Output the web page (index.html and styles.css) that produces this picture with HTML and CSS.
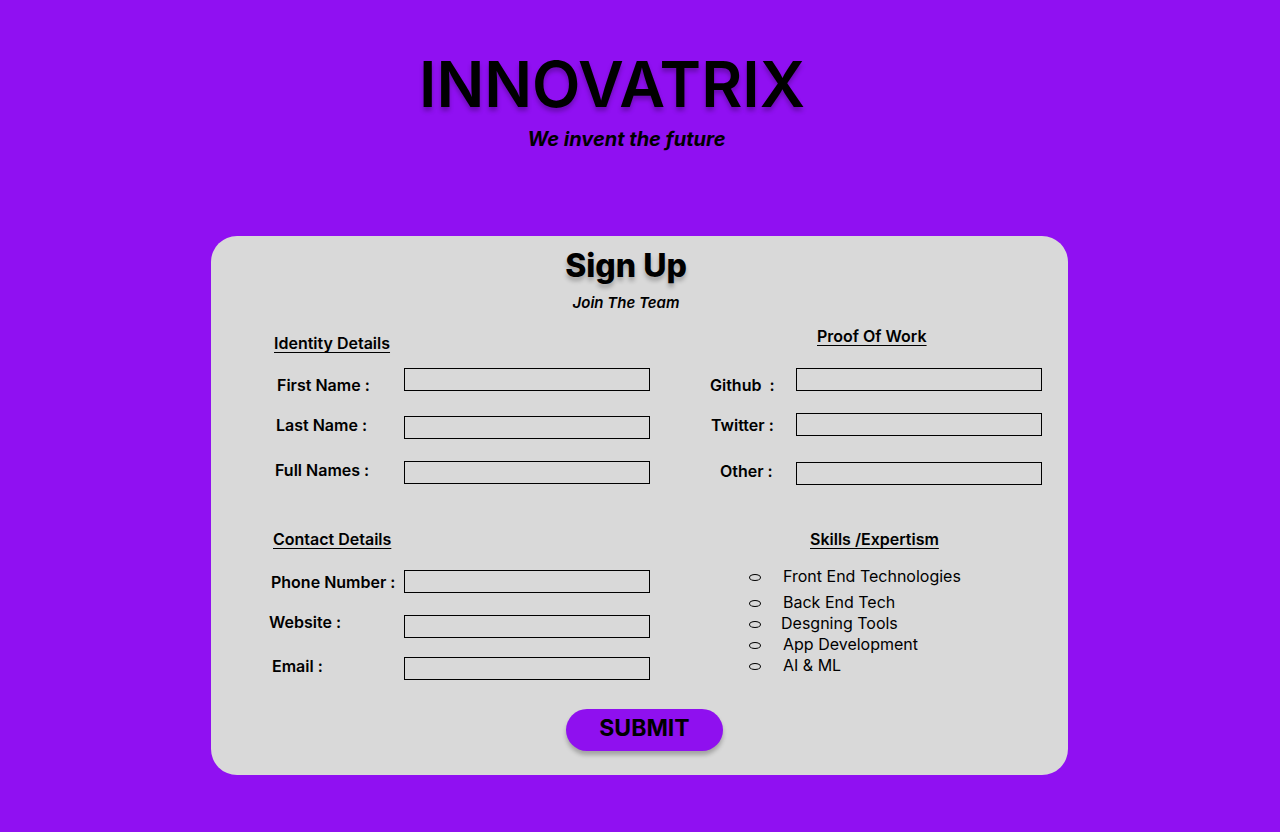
FILE: index.html
```html
<!DOCTYPE html>
<html lang="en">
<head>
<meta charset="utf-8">
<title>Innovatrix - Sign Up</title>
<link rel="stylesheet" href="styles.css">
</head>
<body>
<header class="brand">
  <h1 class="brand-title">INNOVATRIX</h1>
  <p class="brand-tagline">We invent the future</p>
</header>

<main class="card">
  <div class="card-head">
    <h2 class="card-title">Sign Up</h2>
    <p class="card-sub">Join The Team</p>
  </div>

  <form class="form-grid">
    <div class="col col-left">
      <section class="group group-identity">
        <h3 class="group-title gt-identity">Identity Details</h3>
        <div class="row r-first"><label class="lbl">First Name :</label><input class="field" type="text"></div>
        <div class="row r-last"><label class="lbl">Last Name :</label><input class="field" type="text"></div>
        <div class="row r-full"><label class="lbl">Full Names :</label><input class="field" type="text"></div>
      </section>
      <section class="group group-contact">
        <h3 class="group-title gt-contact">Contact Details</h3>
        <div class="row r-phone"><label class="lbl">Phone Number :</label><input class="field" type="text"></div>
        <div class="row r-web"><label class="lbl">Website :</label><input class="field" type="text"></div>
        <div class="row r-email"><label class="lbl">Email :</label><input class="field" type="text"></div>
      </section>
    </div>

    <div class="col col-right">
      <section class="group group-proof">
        <h3 class="group-title gt-proof">Proof Of Work</h3>
        <div class="row r-github"><label class="lbl">Github&nbsp; :</label><input class="field" type="text"></div>
        <div class="row r-twitter"><label class="lbl">Twitter :</label><input class="field" type="text"></div>
        <div class="row r-other"><label class="lbl">Other :</label><input class="field" type="text"></div>
      </section>
      <section class="group group-skills">
        <h3 class="group-title gt-skills">Skills /Expertism</h3>
        <ul class="skills">
          <li class="skill s-front"><span class="dot"></span><span class="skill-text">Front End Technologies</span></li>
          <li class="skill"><span class="dot"></span><span class="skill-text">Back End Tech</span></li>
          <li class="skill"><span class="dot"></span><span class="skill-text s-shift">Desgning Tools</span></li>
          <li class="skill"><span class="dot"></span><span class="skill-text">App Development</span></li>
          <li class="skill"><span class="dot"></span><span class="skill-text">AI &amp; ML</span></li>
        </ul>
      </section>
    </div>

    <div class="actions">
      <button class="submit" type="button">SUBMIT</button>
    </div>
  </form>
</main>
</body>
</html>
```

FILE: styles.css
```css
* { box-sizing: border-box; }

html, body {
  margin: 0;
  padding: 0;
}

body {
  background: #9010f2;
  font-family: Inter, "Noto Sans", "Liberation Sans", sans-serif;
  color: #000;
  width: 1280px;
  height: 832px;
  overflow: hidden;
}

/* ---------- brand header ---------- */
.brand {
  padding-top: 52px;
  text-align: center;
  height: 236px;
}

.brand-title {
  margin: 0 56px 0 0;
  font-size: 63px;
  line-height: 64px;
  font-weight: 600;
  letter-spacing: 0;
  text-shadow: 0 4px 4px rgba(0, 0, 0, 0.25);
}

.brand-tagline {
  margin: 11px 27px 0 0;
  font-size: 20px;
  line-height: 24px;
  font-weight: 700;
  font-style: italic;
}

/* ---------- card ---------- */
.card {
  width: 857px;
  height: 539px;
  margin: 0 0 0 211px;
  background: #d9d9d9;
  border-radius: 26px;
  padding: 10px 26px 0 58px;
}

.card-head {
  text-align: center;
  margin: 0 1px 0 -58px;
}

.card-title {
  margin: 0;
  font-size: 32px;
  line-height: 40px;
  font-weight: 800;
  text-shadow: 0 4px 4px rgba(0, 0, 0, 0.25);
}

.card-sub {
  margin: 8px 0 0 0;
  font-size: 15px;
  line-height: 18px;
  font-weight: 600;
  font-style: italic;
}

/* ---------- form grid ---------- */
.form-grid {
  display: grid;
  grid-template-columns: 381px 342px;
  column-gap: 50px;
}

.col {
  display: flex;
  flex-direction: column;
}

.group-title {
  margin: 0;
  font-size: 16px;
  line-height: 18px;
  font-weight: 600;
  text-decoration: underline;
  text-underline-offset: 3px;
  text-decoration-thickness: 1px;
}

.gt-identity { margin: 22px 0 0 5px; }
.gt-contact  { margin: 46px 0 0 4px; }
.gt-proof    { margin: 15px 0 0 117px; }
.gt-skills   { margin: 45px 0 0 110px; }

.row {
  display: flex;
  align-items: flex-start;
  height: 23px;
}

.lbl {
  font-size: 16px;
  line-height: 18px;
  font-weight: 600;
  white-space: nowrap;
}

.col-left .lbl { width: 135px; }
.col-right .lbl { width: 96px; }

.field {
  display: block;
  width: 246px;
  height: 23px;
  margin: 0;
  padding: 0 4px;
  border: 1px solid #000;
  border-radius: 0;
  background: transparent;
  font: inherit;
}

/* row spacing & label offsets */
.r-first  { margin-top: 16px; }
.r-first .lbl  { margin-top: 8px; padding-left: 8px; }
.r-last   { margin-top: 25px; }
.r-last .lbl   { margin-top: 0; padding-left: 7px; }
.r-full   { margin-top: 22px; }
.r-full .lbl   { margin-top: 0; padding-left: 6px; }

.r-phone  { margin-top: 22px; }
.r-phone .lbl  { margin-top: 3px; padding-left: 2px; }
.r-web    { margin-top: 22px; }
.r-web .lbl    { margin-top: -2px; padding-left: 0; }
.r-email  { margin-top: 19px; }
.r-email .lbl  { margin-top: 0; padding-left: 3px; }

.r-github { margin-top: 23px; }
.r-github .lbl { margin-top: 8px; padding-left: 10px; }
.r-twitter { margin-top: 22px; }
.r-twitter .lbl { margin-top: 3px; padding-left: 11px; }
.r-other  { margin-top: 26px; }
.r-other .lbl  { margin-top: 0; padding-left: 20px; }

/* ---------- skills ---------- */
.skills {
  list-style: none;
  margin: 18px 0 0 0;
  padding: 0 0 0 49px;
}

.skill {
  display: flex;
  align-items: center;
  height: 20px;
  font-size: 16px;
  line-height: 20px;
  font-weight: 400;
}

.skill + .skill { margin-top: 1px; }
.skill.s-front + .skill { margin-top: 6px; }

.dot {
  width: 12px;
  height: 7px;
  border: 1px solid #000;
  border-radius: 50%;
  margin-top: 2px;
  flex: none;
}

.skill-text { margin-left: 22px; }
.skill-text.s-shift { margin-left: 20px; }

/* ---------- submit ---------- */
.actions {
  grid-column: 1 / -1;
  display: flex;
  justify-content: center;
  padding-right: 22px;
  margin-top: 29px;
}

.submit {
  width: 157px;
  height: 42px;
  border: none;
  border-radius: 21px;
  background: #8f10ef;
  color: #000;
  font-family: inherit;
  font-size: 23px;
  line-height: 28px;
  font-weight: 700;
  padding: 0 0 4px 0;
  box-shadow: 0 4px 4px rgba(0, 0, 0, 0.25);
  cursor: pointer;
}
```
